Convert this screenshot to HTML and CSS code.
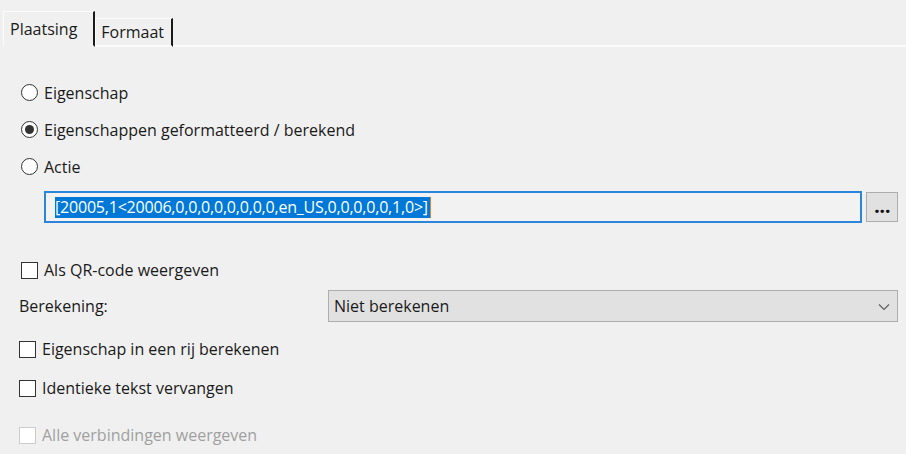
FILE: index.html
```html
<!DOCTYPE html>
<html lang="nl">
<head>
  <meta charset="UTF-8" />
  <title>Eigenschappen</title>
  <link rel="stylesheet" href="styles.css">
</head>
<body>
  <div class="tabs">
    <div class="tab active">Plaatsing</div>
    <div class="tab">Formaat</div>
    <div class="tab-rest"></div>
  </div>

  <main class="panel">
    <label class="radio-row first">
      <span class="radio"></span>
      Eigenschap
    </label>
    <label class="radio-row">
      <span class="radio checked"></span>
      Eigenschappen geformatteerd / berekend
    </label>
    <label class="radio-row">
      <span class="radio"></span>
      Actie
    </label>

    <div class="field-row">
      <div class="text-field">
        <span class="selected">[20005,1&lt;20006,0,0,0,0,0,0,0,0,en_US,0,0,0,0,0,1,0&gt;]</span><span class="caret"></span>
      </div>
      <button class="dots" type="button">...</button>
    </div>

    <label class="check-row qr">
      <span class="box"></span>
      Als QR-code weergeven
    </label>

    <div class="calc-row">
      <span class="calc-label">Berekening:</span>
      <div class="select">
        <span>Niet berekenen</span>
        <svg class="chevron" width="12" height="8" viewBox="0 0 12 8">
          <path d="M1 1.5 L6 6.5 L11 1.5" fill="none" stroke="#606060" stroke-width="1.2"/>
        </svg>
      </div>
    </div>

    <label class="check-row row-calc">
      <span class="box"></span>
      Eigenschap in een rij berekenen
    </label>
    <label class="check-row row-ident">
      <span class="box"></span>
      Identieke tekst vervangen
    </label>
    <label class="check-row row-links disabled">
      <span class="box"></span>
      Alle verbindingen weergeven
    </label>
  </main>
</body>
</html>
```

FILE: styles.css
```css
body {
  margin: 0;
  background: #f0f0f0;
  font-family: "Open Sans", "Noto Sans", sans-serif;
  font-size: 16px;
  color: #1a1a1a;
  width: 906px;
  height: 454px;
  overflow: hidden;
}

/* tab strip */
.tabs {
  display: flex;
  align-items: flex-end;
  height: 47px;
  padding-left: 3px;
}
.tab {
  height: 26px;
  padding: 0 7px 0 5px;
  display: flex;
  align-items: center;
  border-top: 1px solid #fcfcfc;
  border-left: 1px solid #fcfcfc;
  border-right: 2px solid #1a1a1a;
  border-bottom: 2px solid #fcfcfc;
}
.tab.active {
  height: 33px;
  padding: 0 16px 0 6px;
  border-bottom-color: #f0f0f0;
}
.tab-rest {
  flex: 1;
  border-bottom: 2px solid #fcfcfc;
}

/* panel */
.panel {
  padding: 27px 8px 0 21px;
  display: flex;
  flex-direction: column;
}

.radio-row {
  height: 37px;
  display: flex;
  align-items: center;
  gap: 6px;
}
.radio {
  width: 15px;
  height: 15px;
  border: 1px solid #333;
  border-radius: 50%;
  background: #fff;
  display: flex;
  align-items: center;
  justify-content: center;
}
.radio.checked::after {
  content: "";
  width: 9px;
  height: 9px;
  border-radius: 50%;
  background: #333;
}

.field-row {
  display: flex;
  gap: 4px;
  margin: 6px 0 0 23px;
}
.text-field {
  flex: 1;
  height: 28px;
  border: 2px solid #2b86db;
  display: flex;
  align-items: center;
  padding-left: 9px;
  background: #f2f2f2;
}
.selected {
  background: #0078d7;
  color: #fff;
  line-height: 21px;
  letter-spacing: -0.2px;
  padding-right: 2px;
}
.caret {
  width: 1px;
  height: 21px;
  background: #e8822a;
}
.dots {
  width: 32px;
  height: 30px;
  margin-top: 1px;
  background: #e1e1e1;
  border: 1px solid #adadad;
  font-family: inherit;
  font-weight: 800;
  font-size: 17px;
  letter-spacing: 0.5px;
  line-height: 20px;
  padding: 0 0 0 1px;
  color: #111;
}

.check-row {
  height: 30px;
  display: flex;
  align-items: center;
  gap: 6px;
  margin-left: -2px;
}
.box {
  width: 15px;
  height: 15px;
  border: 1px solid #333;
  background: #fff;
}
.check-row.qr {
  margin: 32px 0 0 0;
}
.row-calc { margin-top: 12px; }
.row-ident { margin-top: 9px; }
.row-links { margin-top: 17px; }
.check-row.disabled { color: #a0a0a0; }
.check-row.disabled .box { border-color: #cccccc; }

.calc-row {
  display: flex;
  align-items: center;
  margin-top: 5px;
}
.calc-label {
  width: 309px;
  margin-left: -2px;
}
.select {
  flex: 1;
  height: 30px;
  display: flex;
  align-items: center;
  justify-content: space-between;
  padding: 0 7px 0 5px;
  background: #e1e1e1;
  border: 1px solid #adadad;
}
.chevron { margin-top: 1px; }
```
